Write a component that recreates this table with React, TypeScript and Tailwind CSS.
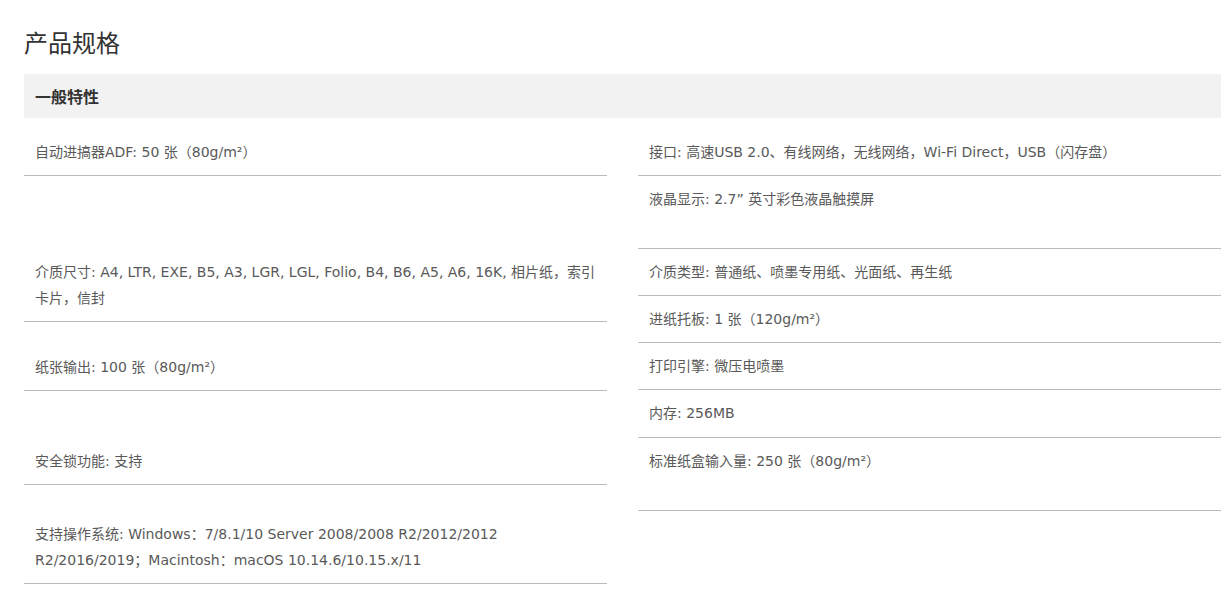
const font = {
  fontFamily: '"DejaVu Sans", "Noto Sans CJK SC", sans-serif',
};

interface SpecProps {
  text: string;
  className?: string;
}

function Spec({ text, className = "" }: SpecProps) {
  return (
    <div
      className={`border-b border-[#bcbcbc] px-[11px] pt-[10px] text-[14px] leading-[26px] text-[#595959] ${className}`}
    >
      {text}
    </div>
  );
}

export default function App() {
  return (
    <div className="min-h-[589px] w-[1227px] bg-white" style={font}>
      <div className="pl-[24px] pr-[6px]">
        <h2
          className="pt-[26px] text-[24px] leading-[32px] font-normal text-[#333]"
          style={{ fontFamily: '"Noto Sans CJK SC", sans-serif' }}
        >
          产品规格
        </h2>
        <div
          className="mt-[16px] flex h-[44px] items-center bg-[#f2f2f2] px-[11px] text-[16px] font-bold text-[#333]"
          style={{ fontFamily: '"Noto Sans CJK SC", sans-serif' }}
        >
          一般特性
        </div>

        <div className="mt-[11px] grid grid-cols-2 items-start gap-x-[31px]">
          <div className="flex flex-col">
            <Spec className="pb-[10px]" text="自动进搞器ADF: 50 张（80g/m²）" />
            <Spec
              className="mt-[73px] pb-[10px]"
              text="介质尺寸: A4, LTR, EXE, B5, A3, LGR, LGL, Folio, B4, B6, A5, A6, 16K, 相片纸，索引卡片，信封"
            />
            <Spec className="mt-[22px] pb-[10px]" text="纸张输出: 100 张（80g/m²）" />
            <Spec className="mt-[47px] pb-[10px]" text="安全锁功能: 支持" />
            <Spec
              className="mt-[26px] pb-[10px]"
              text="支持操作系统: Windows：7/8.1/10 Server 2008/2008 R2/2012/2012 R2/2016/2019；Macintosh：macOS 10.14.6/10.15.x/11"
            />
          </div>

          <div className="flex flex-col">
            <Spec className="pb-[10px]" text="接口: 高速USB 2.0、有线网络，无线网络，Wi-Fi Direct，USB（闪存盘）" />
            <Spec className="pb-[36px]" text="液晶显示: 2.7” 英寸彩色液晶触摸屏" />
            <Spec className="pb-[10px]" text="介质类型: 普通纸、喷墨专用纸、光面纸、再生纸" />
            <Spec className="pb-[10px]" text="进纸托板: 1 张（120g/m²）" />
            <Spec className="pb-[10px]" text="打印引擎: 微压电喷墨" />
            <Spec className="pb-[11px]" text="内存: 256MB" />
            <Spec className="pb-[36px]" text="标准纸盒输入量: 250 张（80g/m²）" />
          </div>
        </div>
      </div>
    </div>
  );
}
